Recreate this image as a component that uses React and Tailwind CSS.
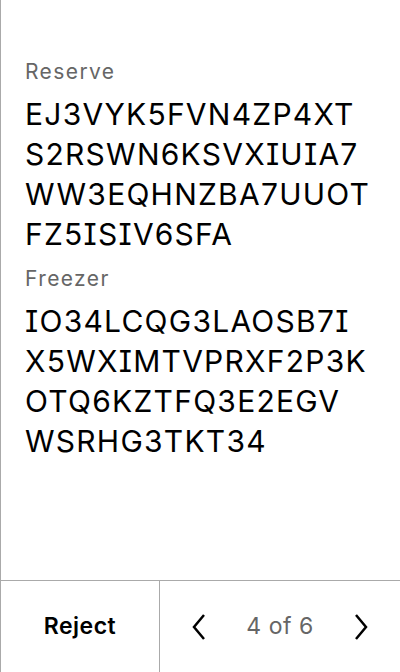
const reserve = ["EJ3VYK5FVN4ZP4XT", "S2RSWN6KSVXIUIA7", "WW3EQHNZBA7UUOT", "FZ5ISIV6SFA"];
const freezer = ["IO34LCQG3LAOSB7I", "X5WXIMTVPRXF2P3K", "OTQ6KZTFQ3E2EGV", "WSRHG3TKT34"];

function Block({ lines }) {
  return (
    <div className="mt-[8px] text-[30px] leading-[40px] tracking-[1.25px] text-black">
      {lines.map((l) => (
        <div key={l} className="whitespace-nowrap">{l}</div>
      ))}
    </div>
  );
}

export default function App() {
  return (
    <div
      className="w-[400px] h-[672px] bg-white flex flex-col border-l border-[#aaaaaa] [font-feature-settings:'cv08'] font-[Inter,'Liberation_Sans',sans-serif]"
    >
      <div className="flex-1 pl-[24px] pr-[24px] pt-[58px] overflow-hidden">
        <div className="text-[21px] leading-[28px] tracking-[1.4px] text-[#666666]">Reserve</div>
        <Block lines={reserve} />
        <div className="text-[21px] leading-[28px] tracking-[1.4px] text-[#666666] mt-[11px]">Freezer</div>
        <Block lines={freezer} />
      </div>
      <div className="h-[92px] border-t border-[#aaaaaa] flex">
        <div className="w-[159px] border-r border-[#aaaaaa] flex items-center justify-center text-[23px] tracking-[0.5px] font-semibold text-black">Reject</div>
        <div className="flex-1 flex items-center justify-between pl-[32px] pr-[32px]">
          <svg width="14" height="28" viewBox="0 0 14 28" fill="none" stroke="black" strokeWidth="2.5">
            <path d="M12 2 L2 14 L12 26" />
          </svg>
          <span className="text-[23px] tracking-[0.5px] text-[#666666]">4 of 6</span>
          <svg width="14" height="28" viewBox="0 0 14 28" fill="none" stroke="black" strokeWidth="2.5">
            <path d="M2 2 L12 14 L2 26" />
          </svg>
        </div>
      </div>
    </div>
  );
}
